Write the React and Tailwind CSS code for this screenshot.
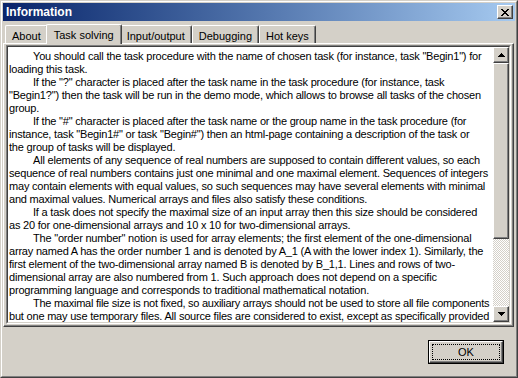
import React from 'react';

const LINES = [
  { t: 'You should call the task procedure with the name of chosen task (for instance, task "Begin1") for', i: true },
  { t: 'loading this task.' },
  { t: 'If the "?" character is placed after the task name in the task procedure (for instance, task', i: true },
  { t: '"Begin1?") then the task will be run in the demo mode, which allows to browse all tasks of the chosen' },
  { t: 'group.' },
  { t: 'If the "#" character is placed after the task name or the group name in the task procedure (for', i: true },
  { t: 'instance, task "Begin1#" or task "Begin#") then an html-page containing a description of the task or' },
  { t: 'the group of tasks will be displayed.' },
  { t: 'All elements of any sequence of real numbers are supposed to contain different values, so each', i: true },
  { t: 'sequence of real numbers contains just one minimal and one maximal element. Sequences of integers' },
  { t: 'may contain elements with equal values, so such sequences may have several elements with minimal' },
  { t: 'and maximal values. Numerical arrays and files also satisfy these conditions.' },
  { t: 'If a task does not specify the maximal size of an input array then this size should be considered', i: true },
  { t: 'as 20 for one-dimensional arrays and 10 x 10 for two-dimensional arrays.' },
  { t: 'The "order number" notion is used for array elements; the first element of the one-dimensional', i: true },
  { t: 'array named A has the order number 1 and is denoted by A_1 (A with the lower index 1). Similarly, the' },
  { t: 'first element of the two-dimensional array named B is denoted by B_1,1. Lines and rows of two-' },
  { t: 'dimensional array are also numbered from 1. Such approach does not depend on a specific' },
  { t: 'programming language and corresponds to traditional mathematical notation.' },
  { t: 'The maximal file size is not fixed, so auxiliary arrays should not be used to store all file components', i: true, tight: true },
  { t: 'but one may use temporary files. All source files are considered to exist, except as specifically provided' },
];

const TABS = ['About', 'Task solving', 'Input/output', 'Debugging', 'Hot keys'];

// classic raised bevel: white/light top-left, dark/gray bottom-right
const raised =
  'border border-t-white border-l-white border-r-[#404040] border-b-[#404040] shadow-[inset_-1px_-1px_#808080]';

function ArrowButton({ down }) {
  return (
    <div className={`${raised} w-[16px] h-[16px] bg-[#d4d0c8] flex items-center justify-center`}>
      <svg width="7" height="4" viewBox="0 0 7 4" shapeRendering="crispEdges">
        {down ? (
          <path d="M0 0h7v1H0zM1 1h5v1H1zM2 2h3v1H2zM3 3h1v1H3z" fill="#000" />
        ) : (
          <path d="M3 0h1v1H3zM2 1h3v1H2zM1 2h5v1H1zM0 3h7v1H0z" fill="#000" />
        )}
      </svg>
    </div>
  );
}

function Scrollbar() {
  return (
    <div className="w-[16px] flex flex-col bg-[repeating-conic-gradient(#ffffff_0_25%,#d4d0c8_0_50%)] bg-[length:2px_2px]">
      <ArrowButton />
      <div className={`${raised} h-[176px] bg-[#d4d0c8]`} />
      <div className="flex-1" />
      <ArrowButton down />
    </div>
  );
}

export default function App() {
  return (
    <div
      className="w-[518px] h-[378px] bg-[#d4d0c8] border border-t-[#d4d0c8] border-l-[#d4d0c8] border-r-[#404040] border-b-[#404040] text-black"
      style={{ fontFamily: '"Liberation Sans", Arial, sans-serif' }}
    >
      <div className="h-full border border-t-white border-l-white border-r-[#808080] border-b-[#808080] p-px flex flex-col">
        {/* title bar */}
        <div className="h-[18px] flex items-center justify-between pl-[3px] pr-[2px] bg-gradient-to-r from-[#0a246a] to-[#a6caf0]">
          <span className="text-white font-bold text-[12px] leading-none">Information</span>
          <div className={`${raised} w-[16px] h-[14px] bg-[#d4d0c8] flex items-center justify-center`}>
            <svg width="8" height="7" viewBox="0 0 8 7" shapeRendering="crispEdges">
              <path
                d="M0 0h2v1H0zM6 0h2v1H6zM1 1h2v1H1zM5 1h2v1H5zM2 2h4v1H2zM3 3h2v1H3zM2 4h4v1H2zM1 5h2v1H1zM5 5h2v1H5zM0 6h2v1H0zM6 6h2v1H6z"
                fill="#000"
              />
            </svg>
          </div>
        </div>

        {/* tabs */}
        <div className="h-[20px] mt-[2px] flex items-end pl-[2px] text-[11px] relative z-10">
          {TABS.map((tab) =>
            tab === 'Task solving' ? (
              <div
                key={tab}
                className="h-[20px] -mx-[2px] -mb-px px-[7px] pt-[2px] bg-[#d4d0c8] border-t border-l border-r border-t-white border-l-white border-r-[#404040] shadow-[inset_-1px_0_#808080] rounded-t-[2px] relative"
              >
                {tab}
              </div>
            ) : (
              <div
                key={tab}
                className="h-[18px] px-[6px] pt-[2px] border-t border-l border-r border-t-white border-l-white border-r-[#404040] shadow-[inset_-1px_0_#808080] rounded-t-[2px]"
              >
                {tab}
              </div>
            )
          )}
        </div>

        {/* tab page */}
        <div className="h-[284px] mr-[1px] border border-t-white border-l-white border-r-[#404040] border-b-[#404040] shadow-[inset_-1px_-1px_#808080] pt-px pl-[2px] pr-[2px] pb-[2px]">
          <div className="h-full border border-t-[#808080] border-l-[#808080] border-r-white border-b-white">
            <div className="h-full border border-t-[#404040] border-l-[#404040] border-r-[#d4d0c8] border-b-[#d4d0c8] flex bg-white">
              <div className="flex-1 overflow-hidden pl-px pt-[3px] text-[11px] leading-[13px] tracking-[-0.2px]">
                {LINES.map((l, k) => (
                  <div
                    key={k}
                    className={`whitespace-nowrap h-[13px] ${l.i ? 'pl-[24px]' : ''} ${l.tight ? 'tracking-[-0.26px]' : ''}`}
                  >
                    {l.t}
                  </div>
                ))}
              </div>
              <Scrollbar />
            </div>
          </div>
        </div>

        {/* buttons */}
        <div className="flex-1 flex justify-end items-start pt-[13px] pr-[11px]">
          <div className="w-[76px] h-[24px] border border-black bg-[#d4d0c8]">
            <div className="h-full border border-t-white border-l-white border-r-[#404040] border-b-[#404040] shadow-[inset_-1px_-1px_#808080] p-[2px]">
              <div className="h-full border border-dotted border-black flex items-center justify-center text-[11px]">
                OK
              </div>
            </div>
          </div>
        </div>
      </div>
    </div>
  );
}
